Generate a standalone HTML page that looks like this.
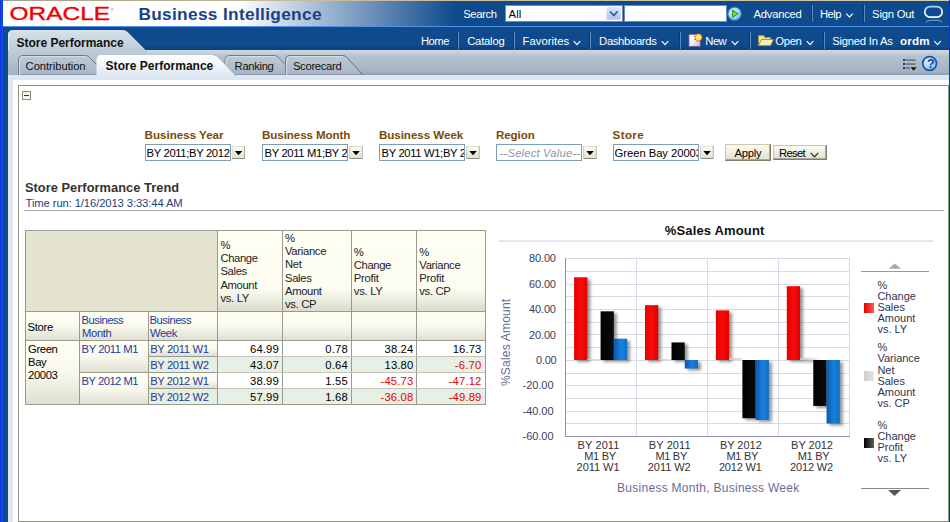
<!DOCTYPE html>
<html lang="en"><head><meta charset="utf-8"><title>Store Performance - Oracle Business Intelligence</title>
<style>
html,body{margin:0;padding:0}
body{width:950px;height:522px;overflow:hidden;background:#fff;position:relative;font-family:"Liberation Sans",sans-serif}
#bg{position:absolute;left:0;top:0}
.t{position:absolute;white-space:pre;line-height:1;font-family:"Liberation Sans",sans-serif}
</style></head><body>
<svg id="bg" width="950" height="522" viewBox="0 0 950 522"><defs>
<linearGradient id="hdr" x1="0" y1="0" x2="950" y2="0" gradientUnits="userSpaceOnUse">
 <stop offset="0" stop-color="#fff"/><stop offset="0.25" stop-color="#fff"/><stop offset="0.48" stop-color="#0e4a8c"/><stop offset="1" stop-color="#0e4a8c"/></linearGradient>
<linearGradient id="ptab" x1="0" y1="30" x2="0" y2="75" gradientUnits="userSpaceOnUse"><stop offset="0" stop-color="#d6e1e8"/><stop offset="0.45" stop-color="#bfccd8"/><stop offset="1" stop-color="#a4b3c5"/></linearGradient>
<linearGradient id="tbar" x1="0" y1="50" x2="0" y2="75" gradientUnits="userSpaceOnUse"><stop offset="0" stop-color="#ced8e0"/><stop offset="0.08" stop-color="#c8d2dc"/><stop offset="0.26" stop-color="#b4c2d0"/><stop offset="0.6" stop-color="#abbaca"/><stop offset="0.9" stop-color="#a2b1c3"/><stop offset="0.94" stop-color="#95a4b7"/><stop offset="1" stop-color="#8e9db0"/></linearGradient>
<linearGradient id="itab" x1="0" y1="55" x2="0" y2="75" gradientUnits="userSpaceOnUse"><stop offset="0" stop-color="#bfcbd6"/><stop offset="1" stop-color="#a6b5c6"/></linearGradient>
<linearGradient id="atab" x1="0" y1="55" x2="0" y2="76" gradientUnits="userSpaceOnUse"><stop offset="0" stop-color="#ffffff"/><stop offset="0.45" stop-color="#f4f7fb"/><stop offset="1" stop-color="#dde7f3"/></linearGradient>
<linearGradient id="hc" x1="0" y1="0" x2="0" y2="1"><stop offset="0" stop-color="#fefef3"/><stop offset="0.72" stop-color="#fcfcf0"/><stop offset="1" stop-color="#dbdbce"/></linearGradient>
<linearGradient id="hc2" x1="0" y1="0" x2="0" y2="1"><stop offset="0" stop-color="#fefef3"/><stop offset="0.5" stop-color="#f9f9ee"/><stop offset="1" stop-color="#dfdfd2"/></linearGradient>
<linearGradient id="gred" x1="0" y1="0" x2="1" y2="0"><stop offset="0" stop-color="#e40000"/><stop offset="0.5" stop-color="#fb0a0a"/><stop offset="1" stop-color="#e00000"/></linearGradient>
<linearGradient id="ggray" x1="0" y1="0" x2="1" y2="0"><stop offset="0" stop-color="#c8c8c8"/><stop offset="1" stop-color="#e4e4e4"/></linearGradient>
<linearGradient id="gblk" x1="0" y1="0" x2="1" y2="0"><stop offset="0" stop-color="#000"/><stop offset="1" stop-color="#0c0c0c"/></linearGradient>
<linearGradient id="gblu" x1="0" y1="0" x2="1" y2="0"><stop offset="0" stop-color="#0a58b0"/><stop offset="0.55" stop-color="#1a80dc"/><stop offset="1" stop-color="#0b6fcc"/></linearGradient>
<linearGradient id="lred" x1="0" y1="0" x2="1" y2="0"><stop offset="0" stop-color="#e60000"/><stop offset="1" stop-color="#ff5a5a"/></linearGradient>
<linearGradient id="lgray" x1="0" y1="0" x2="1" y2="0"><stop offset="0" stop-color="#cccccc"/><stop offset="1" stop-color="#e6e6e6"/></linearGradient>
<linearGradient id="lblk" x1="0" y1="0" x2="1" y2="0"><stop offset="0" stop-color="#000"/><stop offset="1" stop-color="#5c5c5c"/></linearGradient>
<linearGradient id="ddb" x1="0" y1="0" x2="0" y2="1"><stop offset="0" stop-color="#dbe6fb"/><stop offset="1" stop-color="#adc3f2"/></linearGradient>
<linearGradient id="doc" x1="0" y1="0" x2="1" y2="1"><stop offset="0" stop-color="#ffffff"/><stop offset="0.5" stop-color="#f1eefb"/><stop offset="1" stop-color="#b9b0df"/></linearGradient>
<linearGradient id="btn" x1="0" y1="0" x2="0" y2="1"><stop offset="0" stop-color="#fbfbf3"/><stop offset="1" stop-color="#e3e3d0"/></linearGradient>
<linearGradient id="ost" x1="0" y1="6" x2="0" y2="18" gradientUnits="userSpaceOnUse"><stop offset="0" stop-color="#a9c9f2"/><stop offset="0.5" stop-color="#e8f1fd"/><stop offset="1" stop-color="#ffffff"/></linearGradient>
<linearGradient id="orf" x1="0" y1="20" x2="0" y2="23.6" gradientUnits="userSpaceOnUse"><stop offset="0" stop-color="#6f9bd2"/><stop offset="1" stop-color="#1d569a"/></linearGradient>
<linearGradient id="topl" x1="0" y1="0" x2="950" y2="0" gradientUnits="userSpaceOnUse"><stop offset="0" stop-color="#a29e8a"/><stop offset="0.3" stop-color="#c6ba98"/><stop offset="1" stop-color="#d8cca8"/></linearGradient>
<radialGradient id="help" cx="0.35" cy="0.3" r="0.9"><stop offset="0" stop-color="#dcf0ff"/><stop offset="0.6" stop-color="#9dd2fa"/><stop offset="1" stop-color="#62aef0"/></radialGradient>
<radialGradient id="go" cx="0.45" cy="0.4" r="0.7"><stop offset="0" stop-color="#eaf7ff"/><stop offset="0.6" stop-color="#9fd0f0"/><stop offset="1" stop-color="#2a7fcc"/></radialGradient>
<filter id="sh" x="-20%" y="-20%" width="160%" height="160%"><feGaussianBlur stdDeviation="1.7"/></filter>
</defs><rect x="0" y="0" width="950" height="1" fill="url(#topl)" />
<rect x="3" y="1" width="947" height="25" fill="url(#hdr)" />
<rect x="3" y="26" width="947" height="1" fill="#5391ea" />
<rect x="3" y="27" width="947" height="23" fill="#0e4a8c" />
<rect x="143" y="47" width="807" height="3" fill="#0b447c" />
<rect x="8" y="50" width="942" height="25" fill="url(#tbar)" />
<rect x="3" y="50" width="5" height="472" fill="#0e4a8c" />
<path d="M8,76 L8,35 Q8,30.3 12.5,30.3 L123.5,30.3 Q126,30.3 127.6,31.9 L146,50.5 L8,50.5 Z" fill="url(#ptab)" stroke="none" stroke-width="1" />
<rect x="8" y="50" width="138.5" height="25" fill="url(#ptab)" />
<path d="M8.5,50 L8.5,35 Q8.5,30.8 12.5,30.8 L124,30.8" fill="none" stroke="#e4ecf1" stroke-width="1" />
<path d="M8,522 L8,80 Q8,75 13,75 L950,75 L950,522 Z" fill="#dde7f3" stroke="none" stroke-width="1" />
<path d="M13,522 L13,82 Q13,80 15,80 L950,80 L950,522 Z" fill="#ffffff" stroke="none" stroke-width="1" />
<path d="M285.7,75 L285.7,60.0 Q285.7,55.5 290.2,55.5 L342.7,55.5 Q344.7,55.5 346.3,57.1 L363,75 Z" fill="url(#itab)" stroke="#6e7b8c" stroke-width="1" />
<path d="M286.7,75 L286.7,60.0 Q286.7,56.5 290.2,56.5 L342.7,56.5" fill="none" stroke="#d5dde5" stroke-width="1" />
<path d="M225,75 L225,60.0 Q225,55.5 229.5,55.5 L274.5,55.5 Q276.5,55.5 278.1,57.1 L295,75 Z" fill="url(#itab)" stroke="#6e7b8c" stroke-width="1" />
<path d="M226,75 L226,60.0 Q226,56.5 229.5,56.5 L274.5,56.5" fill="none" stroke="#d5dde5" stroke-width="1" />
<rect x="286" y="66" width="12" height="9" fill="url(#itab)" />
<path d="M285.7,75 L285.7,60.0 Q285.7,55.5 290.2,55.5 L342.7,55.5 Q344.7,55.5 346.3,57.1 L363,75 Z" fill="url(#itab)" stroke="#6e7b8c" stroke-width="1" />
<path d="M286.7,75 L286.7,60.0 Q286.7,56.5 290.2,56.5 L342.7,56.5" fill="none" stroke="#d5dde5" stroke-width="1" />
<path d="M18.5,75 L18.5,60.0 Q18.5,55.5 23.0,55.5 L85.6,55.5 Q87.6,55.5 89.19999999999999,57.1 L107,75 Z" fill="url(#itab)" stroke="#6e7b8c" stroke-width="1" />
<path d="M19.5,75 L19.5,60.0 Q19.5,56.5 23.0,56.5 L85.6,56.5" fill="none" stroke="#d5dde5" stroke-width="1" />
<rect x="8" y="75" width="942" height="1" fill="#dde7f3" />
<path d="M96.5,76 L96.5,60 Q96.5,55 101.5,55 L213,55 Q216,55 218,57 L236,76 Z" fill="url(#atab)" stroke="none" stroke-width="1" />
<path d="M236,76 L218,57 Q216,55 213,55" fill="none" stroke="#9aa7b8" stroke-width="0.6" />
<rect x="0" y="0" width="1" height="522" fill="#0d3ce0" />
<rect x="1" y="0" width="2" height="522" fill="#0f48e4" />
<rect x="949" y="0" width="1" height="522" fill="#0831d9" />
<rect x="811" y="5" width="1" height="17" fill="#0a3a70" />
<rect x="812" y="5" width="1" height="17" fill="#5f8abd" />
<rect x="863" y="5" width="1" height="17" fill="#0a3a70" />
<rect x="864" y="5" width="1" height="17" fill="#5f8abd" />
<rect x="457" y="32" width="1" height="17" fill="#0a3a70" />
<rect x="458" y="32" width="1" height="17" fill="#5f8abd" />
<rect x="513" y="32" width="1" height="17" fill="#0a3a70" />
<rect x="514" y="32" width="1" height="17" fill="#5f8abd" />
<rect x="589" y="32" width="1" height="17" fill="#0a3a70" />
<rect x="590" y="32" width="1" height="17" fill="#5f8abd" />
<rect x="679" y="32" width="1" height="17" fill="#0a3a70" />
<rect x="680" y="32" width="1" height="17" fill="#5f8abd" />
<rect x="749" y="32" width="1" height="17" fill="#0a3a70" />
<rect x="750" y="32" width="1" height="17" fill="#5f8abd" />
<rect x="823" y="32" width="1" height="17" fill="#0a3a70" />
<rect x="824" y="32" width="1" height="17" fill="#5f8abd" />
<path d="M846.5,13.82 L849.5,17.18 L852.5,13.82" fill="none" stroke="#ffffff" stroke-width="1.15" stroke-linecap="round" stroke-linejoin="round"/>
<path d="M574,41.32 L577.0,44.68 L580,41.32" fill="none" stroke="#ffffff" stroke-width="1.15" stroke-linecap="round" stroke-linejoin="round"/>
<path d="M662,41.32 L665.0,44.68 L668,41.32" fill="none" stroke="#ffffff" stroke-width="1.15" stroke-linecap="round" stroke-linejoin="round"/>
<path d="M732,41.32 L735.0,44.68 L738,41.32" fill="none" stroke="#ffffff" stroke-width="1.15" stroke-linecap="round" stroke-linejoin="round"/>
<path d="M807,41.32 L810.0,44.68 L813,41.32" fill="none" stroke="#ffffff" stroke-width="1.15" stroke-linecap="round" stroke-linejoin="round"/>
<path d="M934.5,41.32 L937.5,44.68 L940.5,41.32" fill="none" stroke="#ffffff" stroke-width="1.15" stroke-linecap="round" stroke-linejoin="round"/>
<rect x="505" y="5" width="117" height="16" fill="#ffffff" stroke="#6d8db5" stroke-width="1" transform="translate(.5,.5)"/>
<rect x="606.5" y="6.7" width="14.3" height="13" fill="url(#ddb)" rx="1.5"/>
<path d="M610.5,12 L613.8,15.5 L617,12" fill="none" stroke="#3b5a96" stroke-width="1.8" stroke-linecap="round" stroke-linejoin="round"/>
<rect x="624" y="5" width="102" height="16" fill="#ffffff" stroke="#6d8db5" stroke-width="1" transform="translate(.5,.5)"/>
<circle cx="734.6" cy="13.8" r="6.9" fill="url(#go)" stroke="#1e6fc0" stroke-width="1.2"/>
<path d="M732.6,10.3 L737.9,13.7 L732.6,17.1 Z" fill="#86dc4c" stroke="#379a18" stroke-width="1.1" stroke-linejoin="round"/>
<text x="9.6" y="20" font-family="Liberation Sans, sans-serif" font-size="18.2" fill="#f00000" stroke="#f00000" stroke-width="0.35" textLength="100.5" lengthAdjust="spacingAndGlyphs">ORACLE</text>
<text x="111" y="10.5" font-family="Liberation Sans, sans-serif" font-size="3.5" fill="#f00000">®</text>
<rect x="924.8" y="6.7" width="17.4" height="10.5" rx="5.25" fill="none" stroke="url(#ost)" stroke-width="1.75"/>
<path d="M925.6,23.4 Q926.6,20.4 930.3,20.4 L937.7,20.4 Q941.4,20.4 942.4,23.4" fill="none" stroke="url(#orf)" stroke-width="1.4" />
<path d="M688.9,34.3 L700.3,34.3 L700.3,46.6 L688.9,46.6 Z" fill="url(#doc)" stroke="#5a5590" stroke-width="0.9" />
<circle cx="698.4" cy="37.4" r="3.6" fill="#ffe23a" stroke="#d8401a" stroke-width="1.3" stroke-dasharray="1.6 1.2"/>
<path d="M698.4,34.4 V40.4 M695.4,37.4 H701.4" fill="none" stroke="#fff7a8" stroke-width="1" />
<path d="M758.5,45.5 L758.5,35.5 L763.5,35.5 L765,37.5 L770.5,37.5 L770.5,40" fill="#efe09a" stroke="#a8923a" stroke-width="1" />
<path d="M758.5,45.5 L761.5,39.5 L773.5,39.5 L770.5,45.5 Z" fill="#f7eeb4" stroke="#a8923a" stroke-width="1" />
<rect x="903" y="59.0" width="2" height="2" fill="#3b2f8a" />
<rect x="905.5" y="59.5" width="10" height="1.1" fill="#4f4f4f" />
<rect x="903" y="63.0" width="2" height="2" fill="#3b2f8a" />
<rect x="905.5" y="63.5" width="10" height="1.1" fill="#4f4f4f" />
<rect x="903" y="67.0" width="2" height="2" fill="#3b2f8a" />
<rect x="905.5" y="67.5" width="4.5" height="1.1" fill="#4f4f4f" />
<path d="M910.6,67.2 L916.6,67.2 L913.6,70.8 Z" fill="#111" stroke="none" stroke-width="1" />
<circle cx="929.6" cy="63.5" r="6.9" fill="url(#help)" stroke="#1552b2" stroke-width="1.7"/>
<rect x="18.5" y="85.5" width="930" height="436" fill="none" stroke="#8f8f82" stroke-width="1"/>
<rect x="22.5" y="91.5" width="8" height="8" fill="#f5f5ea" stroke="#8b8b80" stroke-width="1"/>
<rect x="24" y="95" width="5" height="1" fill="#333" />
<rect x="24" y="210" width="920" height="1" fill="#a6abb4" />
<rect x="25" y="230" width="461" height="175" fill="#9b9b8d" />
<rect x="26" y="231" width="191" height="80" fill="#e4e4d1" />
<rect x="218" y="231" width="64" height="80" fill="url(#hc)" />
<rect x="283" y="231" width="68" height="80" fill="url(#hc)" />
<rect x="352" y="231" width="64" height="80" fill="url(#hc)" />
<rect x="417" y="231" width="68" height="80" fill="url(#hc)" />
<rect x="26" y="312" width="53" height="28" fill="url(#hc2)" />
<rect x="80" y="312" width="68" height="28" fill="url(#hc2)" />
<rect x="149" y="312" width="68" height="28" fill="url(#hc2)" />
<rect x="218" y="312" width="64" height="28" fill="url(#hc2)" />
<rect x="283" y="312" width="68" height="28" fill="url(#hc2)" />
<rect x="352" y="312" width="64" height="28" fill="url(#hc2)" />
<rect x="417" y="312" width="68" height="28" fill="url(#hc2)" />
<rect x="26" y="341" width="53" height="63" fill="url(#hc2)" />
<rect x="80" y="341" width="68" height="31" fill="url(#hc2)" />
<rect x="80" y="373" width="68" height="31" fill="url(#hc2)" />
<rect x="149" y="341" width="68" height="15" fill="url(#hc2)" />
<rect x="218" y="341" width="64" height="15" fill="#ffffff" />
<rect x="283" y="341" width="68" height="15" fill="#ffffff" />
<rect x="352" y="341" width="64" height="15" fill="#ffffff" />
<rect x="417" y="341" width="68" height="15" fill="#ffffff" />
<rect x="149" y="357" width="68" height="15" fill="#e6efe3" />
<rect x="218" y="357" width="64" height="15" fill="#e7f0e4" />
<rect x="283" y="357" width="68" height="15" fill="#e7f0e4" />
<rect x="352" y="357" width="64" height="15" fill="#e7f0e4" />
<rect x="417" y="357" width="68" height="15" fill="#e7f0e4" />
<rect x="149" y="373" width="68" height="15" fill="url(#hc2)" />
<rect x="218" y="373" width="64" height="15" fill="#ffffff" />
<rect x="283" y="373" width="68" height="15" fill="#ffffff" />
<rect x="352" y="373" width="64" height="15" fill="#ffffff" />
<rect x="417" y="373" width="68" height="15" fill="#ffffff" />
<rect x="149" y="389" width="68" height="15" fill="#e6efe3" />
<rect x="218" y="389" width="64" height="15" fill="#e7f0e4" />
<rect x="283" y="389" width="68" height="15" fill="#e7f0e4" />
<rect x="352" y="389" width="64" height="15" fill="#e7f0e4" />
<rect x="417" y="389" width="68" height="15" fill="#e7f0e4" />
<rect x="218" y="356" width="267" height="1" fill="#c4c4bb" />
<rect x="218" y="372" width="267" height="1" fill="#c4c4bb" />
<rect x="218" y="388" width="267" height="1" fill="#c4c4bb" />
<rect x="499" y="240.5" width="434" height="1.2" fill="#d6d6e6" />
<rect x="566" y="258" width="284" height="1" fill="#dadae7" />
<rect x="566" y="271" width="284" height="1" fill="#dadae7" />
<rect x="566" y="284" width="284" height="1" fill="#dadae7" />
<rect x="566" y="296" width="284" height="1" fill="#dadae7" />
<rect x="566" y="309" width="284" height="1" fill="#dadae7" />
<rect x="566" y="322" width="284" height="1" fill="#dadae7" />
<rect x="566" y="334" width="284" height="1" fill="#dadae7" />
<rect x="566" y="347" width="284" height="1" fill="#dadae7" />
<rect x="566" y="360" width="284" height="1" fill="#dadae7" />
<rect x="566" y="373" width="284" height="1" fill="#dadae7" />
<rect x="566" y="385" width="284" height="1" fill="#dadae7" />
<rect x="566" y="398" width="284" height="1" fill="#dadae7" />
<rect x="566" y="411" width="284" height="1" fill="#dadae7" />
<rect x="566" y="423" width="284" height="1" fill="#dadae7" />
<rect x="636" y="258" width="1" height="179" fill="#d9d9e8" />
<rect x="707" y="258" width="1" height="179" fill="#d9d9e8" />
<rect x="778" y="258" width="1" height="179" fill="#d9d9e8" />
<rect x="849" y="258" width="1" height="179" fill="#d9d9e8" />
<rect x="565" y="258" width="1" height="179" fill="#8e8eb4" />
<rect x="565" y="436" width="285" height="1" fill="#8e8eb4" />
<g filter="url(#sh)" opacity="0.55">
<rect x="577.1" y="279.28" width="13.25" height="82.72" fill="#444" />
<rect x="603.6" y="313.33" width="13.25" height="48.67" fill="#444" />
<rect x="616.85" y="340.71" width="13.25" height="21.29" fill="#444" />
<rect x="648.0" y="307.18" width="13.25" height="54.82" fill="#444" />
<rect x="674.5" y="344.44" width="13.25" height="17.56" fill="#444" />
<rect x="687.75" y="362.0" width="13.25" height="8.53" fill="#444" />
<rect x="718.9" y="312.37" width="13.25" height="49.63" fill="#444" />
<rect x="745.4" y="362.0" width="13.25" height="58.21" fill="#444" />
<rect x="758.65" y="362.0" width="13.25" height="59.97" fill="#444" />
<rect x="789.8" y="288.19" width="13.25" height="73.81" fill="#444" />
<rect x="803.05" y="359.86" width="13.25" height="2.14" fill="#444" />
<rect x="816.3" y="362.0" width="13.25" height="45.92" fill="#444" />
<rect x="829.55" y="362.0" width="13.25" height="63.5" fill="#444" />
</g>
<rect x="574.1" y="277.28" width="13.25" height="82.72" fill="url(#gred)" />
<rect x="587.35" y="359.01" width="13.25" height="0.99" fill="url(#ggray)" />
<rect x="600.6" y="311.33" width="13.25" height="48.67" fill="url(#gblk)" />
<rect x="613.85" y="338.71" width="13.25" height="21.29" fill="url(#gblu)" />
<rect x="645.0" y="305.18" width="13.25" height="54.82" fill="url(#gred)" />
<rect x="658.25" y="359.19" width="13.25" height="0.81" fill="url(#ggray)" />
<rect x="671.5" y="342.44" width="13.25" height="17.56" fill="url(#gblk)" />
<rect x="684.75" y="360.0" width="13.25" height="8.53" fill="url(#gblu)" />
<rect x="715.9" y="310.37" width="13.25" height="49.63" fill="url(#gred)" />
<rect x="729.15" y="358.03" width="13.25" height="1.97" fill="url(#ggray)" />
<rect x="742.4" y="360.0" width="13.25" height="58.21" fill="url(#gblk)" />
<rect x="755.65" y="360.0" width="13.25" height="59.97" fill="url(#gblu)" />
<rect x="786.8" y="286.19" width="13.25" height="73.81" fill="url(#gred)" />
<rect x="800.05" y="357.86" width="13.25" height="2.14" fill="url(#ggray)" />
<rect x="813.3" y="360.0" width="13.25" height="45.92" fill="url(#gblk)" />
<rect x="826.55" y="360.0" width="13.25" height="63.5" fill="url(#gblu)" />
<path d="M888.5,268.8 L894.8,263.6 L901,268.8 Z" fill="#a8a8a8" stroke="none" stroke-width="1" />
<rect x="861" y="271" width="68" height="1" fill="#9a9a9a" />
<rect x="861" y="488" width="68" height="1" fill="#8a8a8a" />
<path d="M888,490 L901,490 L894.5,496 Z" fill="#555" stroke="none" stroke-width="1" />
<rect x="864" y="303" width="10" height="10" fill="url(#lred)" />
<rect x="864" y="371" width="10" height="10" fill="url(#lgray)" />
<rect x="864" y="438" width="10" height="10" fill="url(#lblk)" />
<rect x="232" y="146" width="13" height="13" fill="#8a8a80" />
<rect x="232" y="146" width="12.2" height="12" fill="#dcdcd2" />
<rect x="232.8" y="146.8" width="11.4" height="11.2" fill="url(#btn)" />
<path d="M234.8,151 L242.3,151 L238.55,155.3 Z" fill="#000" stroke="none" stroke-width="1" />
<rect x="349.5" y="146" width="13" height="13" fill="#8a8a80" />
<rect x="349.5" y="146" width="12.2" height="12" fill="#dcdcd2" />
<rect x="350.3" y="146.8" width="11.4" height="11.2" fill="url(#btn)" />
<path d="M352.3,151 L359.8,151 L356.05,155.3 Z" fill="#000" stroke="none" stroke-width="1" />
<rect x="466.5" y="146" width="13" height="13" fill="#8a8a80" />
<rect x="466.5" y="146" width="12.2" height="12" fill="#dcdcd2" />
<rect x="467.3" y="146.8" width="11.4" height="11.2" fill="url(#btn)" />
<path d="M469.3,151 L476.8,151 L473.05,155.3 Z" fill="#000" stroke="none" stroke-width="1" />
<rect x="583.5" y="146" width="13" height="13" fill="#8a8a80" />
<rect x="583.5" y="146" width="12.2" height="12" fill="#dcdcd2" />
<rect x="584.3" y="146.8" width="11.4" height="11.2" fill="url(#btn)" />
<path d="M586.3,151 L593.8,151 L590.05,155.3 Z" fill="#000" stroke="none" stroke-width="1" />
<rect x="700.5" y="146" width="13" height="13" fill="#8a8a80" />
<rect x="700.5" y="146" width="12.2" height="12" fill="#dcdcd2" />
<rect x="701.3" y="146.8" width="11.4" height="11.2" fill="url(#btn)" />
<path d="M703.3,151 L710.8,151 L707.05,155.3 Z" fill="#000" stroke="none" stroke-width="1" />
<rect x="145.5" y="144.5" width="85" height="16" fill="#ffffff" stroke="#7f9db9" stroke-width="1"/>
<rect x="262.5" y="144.5" width="85" height="16" fill="#ffffff" stroke="#7f9db9" stroke-width="1"/>
<rect x="379.5" y="144.5" width="85" height="16" fill="#ffffff" stroke="#7f9db9" stroke-width="1"/>
<rect x="496.5" y="144.5" width="85" height="16" fill="#ffffff" stroke="#7f9db9" stroke-width="1"/>
<rect x="613.5" y="144.5" width="85" height="16" fill="#ffffff" stroke="#7f9db9" stroke-width="1"/>
<rect x="725" y="144" width="46" height="17" fill="#7f7f6c" />
<rect x="725" y="144" width="45" height="16" fill="#cdc9a8" />
<rect x="726" y="145" width="44" height="15" fill="#a9a998" />
<rect x="726" y="145" width="43" height="14" fill="url(#btn)" />
<rect x="773" y="145" width="54" height="15" fill="#7f7f6c" />
<rect x="773" y="145" width="53" height="14" fill="#cdc9a8" />
<rect x="774" y="146" width="52" height="13" fill="#a9a998" />
<rect x="774" y="146" width="51" height="12" fill="url(#btn)" />
<path d="M811,153.04 L814.5,156.96 L818,153.04" fill="none" stroke="#222" stroke-width="1.1" stroke-linecap="round" stroke-linejoin="round"/></svg>

<span class="t" style="left:138.4px;top:6.3px;font-size:17.3px;color:#17428a;letter-spacing:0.32px;font-weight:bold;">Business Intelligence</span>
<span class="t" style="left:463.2px;top:8.8px;font-size:11.25px;color:#ffffff;letter-spacing:-0.39px;">Search</span>
<span class="t" style="left:508.6px;top:8.8px;font-size:11.25px;color:#000;letter-spacing:0.13px;">All</span>
<span class="t" style="left:753.6px;top:8.8px;font-size:11.25px;color:#ffffff;letter-spacing:-0.27px;">Advanced</span>
<span class="t" style="left:819.9px;top:8.8px;font-size:11.25px;color:#ffffff;letter-spacing:-0.51px;">Help</span>
<span class="t" style="left:872.1px;top:8.8px;font-size:11.25px;color:#ffffff;letter-spacing:-0.21px;">Sign Out</span>
<span class="t" style="left:421.0px;top:35.8px;font-size:11.25px;color:#ffffff;letter-spacing:-0.53px;">Home</span>
<span class="t" style="left:467.2px;top:35.8px;font-size:11.25px;color:#ffffff;letter-spacing:-0.21px;">Catalog</span>
<span class="t" style="left:522.6px;top:35.8px;font-size:11.25px;color:#ffffff;letter-spacing:0.04px;">Favorites</span>
<span class="t" style="left:599.1px;top:35.8px;font-size:11.25px;color:#ffffff;letter-spacing:-0.33px;">Dashboards</span>
<span class="t" style="left:705.3px;top:35.8px;font-size:11.25px;color:#ffffff;letter-spacing:-0.54px;">New</span>
<span class="t" style="left:775.3px;top:35.8px;font-size:11.25px;color:#ffffff;letter-spacing:-0.33px;">Open</span>
<span class="t" style="left:832.2px;top:35.8px;font-size:11.25px;color:#ffffff;letter-spacing:-0.22px;">Signed In As</span>
<span class="t" style="left:899.9px;top:34.8px;font-size:11.6px;color:#ffffff;letter-spacing:0.26px;font-weight:bold;">ordm</span>
<span class="t" style="left:16.6px;top:37.1px;font-size:12px;color:#111;letter-spacing:-0.02px;font-weight:bold;">Store Performance</span>
<span class="t" style="left:25.6px;top:60.5px;font-size:11.25px;color:#111;letter-spacing:-0.06px;">Contribution</span>
<span class="t" style="left:105.6px;top:59.5px;font-size:12px;color:#111;letter-spacing:0.02px;font-weight:bold;">Store Performance</span>
<span class="t" style="left:234.6px;top:60.5px;font-size:11.25px;color:#111;letter-spacing:-0.34px;">Ranking</span>
<span class="t" style="left:292.9px;top:60.5px;font-size:11.25px;color:#111;letter-spacing:-0.30px;">Scorecard</span>
<span class="t" style="left:926.9px;top:57.9px;font-size:12.5px;color:#1242a4;font-weight:bold;">?</span>
<span class="t" style="left:144.6px;top:129.0px;font-size:11.6px;color:#7a4a0a;letter-spacing:-0.01px;font-weight:bold;">Business Year</span>
<span class="t" style="left:262.1px;top:129.0px;font-size:11.6px;color:#7a4a0a;letter-spacing:-0.10px;font-weight:bold;">Business Month</span>
<span class="t" style="left:378.9px;top:129.0px;font-size:11.6px;color:#7a4a0a;letter-spacing:-0.04px;font-weight:bold;">Business Week</span>
<span class="t" style="left:495.9px;top:129.0px;font-size:11.6px;color:#7a4a0a;letter-spacing:-0.08px;font-weight:bold;">Region</span>
<span class="t" style="left:612.6px;top:129.0px;font-size:11.6px;color:#7a4a0a;letter-spacing:0.36px;font-weight:bold;">Store</span>
<span class="t" style="left:146.6px;top:147.9px;font-size:11.25px;color:#000;letter-spacing:-0.35px;max-width:83px;overflow:hidden;">BY 2011;BY 2012</span>
<span class="t" style="left:264.5px;top:147.9px;font-size:11.25px;color:#000;letter-spacing:-0.35px;max-width:82px;overflow:hidden;">BY 2011 M1;BY 2012 M1</span>
<span class="t" style="left:381.5px;top:147.9px;font-size:11.25px;color:#000;letter-spacing:-0.35px;max-width:82px;overflow:hidden;">BY 2011 W1;BY 2011 W2</span>
<span class="t" style="left:499.6px;top:147.9px;font-size:11.25px;color:#8b95ad;letter-spacing:0.18px;font-style:italic;">--Select Value--</span>
<span class="t" style="left:614.6px;top:147.9px;font-size:11.25px;color:#000;letter-spacing:-0.05px;max-width:83px;overflow:hidden;">Green Bay 20003</span>
<span class="t" style="left:734.6px;top:147.9px;font-size:11.25px;color:#000;letter-spacing:-0.25px;">Apply</span>
<span class="t" style="left:779.0px;top:147.9px;font-size:11.25px;color:#000;letter-spacing:-0.66px;">Reset</span>
<span class="t" style="left:24.9px;top:181.7px;font-size:12.8px;color:#333;letter-spacing:0.06px;font-weight:bold;">Store Performance Trend</span>
<span class="t" style="left:25.6px;top:197.6px;font-size:11.25px;color:#1d3f78;letter-spacing:-0.11px;">Time run: 1/16/2013 3:33:44 AM</span>
<span class="t" style="left:220.4px;top:240.2px;font-size:11.25px;color:#222;">%</span>
<span class="t" style="left:220.4px;top:253.3px;font-size:11.25px;color:#222;letter-spacing:-0.38px;">Change</span>
<span class="t" style="left:220.4px;top:266.4px;font-size:11.25px;color:#222;letter-spacing:-0.33px;">Sales</span>
<span class="t" style="left:220.4px;top:279.5px;font-size:11.25px;color:#222;letter-spacing:-0.37px;">Amount</span>
<span class="t" style="left:220.4px;top:292.6px;font-size:11.25px;color:#222;letter-spacing:-0.29px;">vs. LY</span>
<span class="t" style="left:285.0px;top:233.2px;font-size:11.25px;color:#222;">%</span>
<span class="t" style="left:285.0px;top:246.3px;font-size:11.25px;color:#222;letter-spacing:-0.31px;">Variance</span>
<span class="t" style="left:285.0px;top:259.4px;font-size:11.25px;color:#222;letter-spacing:-0.34px;">Net</span>
<span class="t" style="left:285.0px;top:272.5px;font-size:11.25px;color:#222;letter-spacing:-0.33px;">Sales</span>
<span class="t" style="left:285.0px;top:285.6px;font-size:11.25px;color:#222;letter-spacing:-0.37px;">Amount</span>
<span class="t" style="left:285.0px;top:298.7px;font-size:11.25px;color:#222;letter-spacing:-0.32px;">vs. CP</span>
<span class="t" style="left:353.8px;top:246.5px;font-size:11.25px;color:#222;">%</span>
<span class="t" style="left:353.8px;top:259.6px;font-size:11.25px;color:#222;letter-spacing:-0.38px;">Change</span>
<span class="t" style="left:353.8px;top:272.7px;font-size:11.25px;color:#222;letter-spacing:-0.25px;">Profit</span>
<span class="t" style="left:353.8px;top:285.8px;font-size:11.25px;color:#222;letter-spacing:-0.29px;">vs. LY</span>
<span class="t" style="left:419.3px;top:246.5px;font-size:11.25px;color:#222;">%</span>
<span class="t" style="left:419.3px;top:259.6px;font-size:11.25px;color:#222;letter-spacing:-0.31px;">Variance</span>
<span class="t" style="left:419.3px;top:272.7px;font-size:11.25px;color:#222;letter-spacing:-0.25px;">Profit</span>
<span class="t" style="left:419.3px;top:285.8px;font-size:11.25px;color:#222;letter-spacing:-0.32px;">vs. CP</span>
<span class="t" style="left:27.6px;top:321.8px;font-size:11.25px;color:#000;letter-spacing:-0.31px;">Store</span>
<span class="t" style="left:81.6px;top:315.0px;font-size:11.25px;color:#223c9c;letter-spacing:-0.52px;">Business</span>
<span class="t" style="left:82.0px;top:327.6px;font-size:11.25px;color:#223c9c;letter-spacing:-0.36px;">Month</span>
<span class="t" style="left:149.6px;top:315.0px;font-size:11.25px;color:#223c9c;letter-spacing:-0.52px;">Business</span>
<span class="t" style="left:150.0px;top:327.6px;font-size:11.25px;color:#223c9c;letter-spacing:-0.41px;">Week</span>
<span class="t" style="left:28.0px;top:343.7px;font-size:11.25px;color:#000;letter-spacing:-0.36px;">Green</span>
<span class="t" style="left:28.0px;top:356.8px;font-size:11.25px;color:#000;letter-spacing:-0.37px;">Bay</span>
<span class="t" style="left:28.0px;top:369.9px;font-size:11.25px;color:#000;letter-spacing:-0.36px;">20003</span>
<span class="t" style="left:81.6px;top:343.7px;font-size:11.25px;color:#223c9c;letter-spacing:-0.45px;">BY 2011 M1</span>
<span class="t" style="left:81.6px;top:375.7px;font-size:11.25px;color:#223c9c;letter-spacing:-0.53px;">BY 2012 M1</span>
<span class="t" style="left:150.2px;top:343.7px;font-size:11.25px;color:#223c9c;letter-spacing:-0.38px;">BY 2011 W1</span>
<span class="t" style="left:150.2px;top:359.7px;font-size:11.25px;color:#223c9c;letter-spacing:-0.38px;">BY 2011 W2</span>
<span class="t" style="left:150.2px;top:375.7px;font-size:11.25px;color:#223c9c;letter-spacing:-0.47px;">BY 2012 W1</span>
<span class="t" style="left:150.2px;top:391.7px;font-size:11.25px;color:#223c9c;letter-spacing:-0.47px;">BY 2012 W2</span>
<span class="t" style="left:250.1px;top:344.0px;font-size:11.25px;color:#000;letter-spacing:0.13px;">64.99</span>
<span class="t" style="left:325.3px;top:344.0px;font-size:11.25px;color:#000;letter-spacing:0.21px;">0.78</span>
<span class="t" style="left:384.5px;top:344.0px;font-size:11.25px;color:#000;letter-spacing:0.13px;">38.24</span>
<span class="t" style="left:452.7px;top:344.0px;font-size:11.25px;color:#000;letter-spacing:0.13px;">16.73</span>
<span class="t" style="left:250.1px;top:360.0px;font-size:11.25px;color:#000;letter-spacing:0.13px;">43.07</span>
<span class="t" style="left:325.3px;top:360.0px;font-size:11.25px;color:#000;letter-spacing:0.21px;">0.64</span>
<span class="t" style="left:384.5px;top:360.0px;font-size:11.25px;color:#000;letter-spacing:0.13px;">13.80</span>
<span class="t" style="left:454.7px;top:360.0px;font-size:11.25px;color:#e60000;letter-spacing:0.22px;">-6.70</span>
<span class="t" style="left:250.1px;top:376.0px;font-size:11.25px;color:#000;letter-spacing:0.13px;">38.99</span>
<span class="t" style="left:325.3px;top:376.0px;font-size:11.25px;color:#000;letter-spacing:0.21px;">1.55</span>
<span class="t" style="left:380.5px;top:376.0px;font-size:11.25px;color:#e60000;letter-spacing:0.15px;">-45.73</span>
<span class="t" style="left:448.7px;top:376.0px;font-size:11.25px;color:#e60000;letter-spacing:0.15px;">-47.12</span>
<span class="t" style="left:250.1px;top:392.0px;font-size:11.25px;color:#000;letter-spacing:0.13px;">57.99</span>
<span class="t" style="left:325.3px;top:392.0px;font-size:11.25px;color:#000;letter-spacing:0.21px;">1.68</span>
<span class="t" style="left:380.5px;top:392.0px;font-size:11.25px;color:#e60000;letter-spacing:0.15px;">-36.08</span>
<span class="t" style="left:448.7px;top:392.0px;font-size:11.25px;color:#e60000;letter-spacing:0.15px;">-49.89</span>
<span class="t" style="left:664.7px;top:223.8px;font-size:13px;color:#111;letter-spacing:0.16px;font-weight:bold;">%Sales Amount</span>
<span class="t" style="left:529.1px;top:253.1px;font-size:11px;color:#3d3d5c;letter-spacing:-0.17px;">80.00</span>
<span class="t" style="left:529.1px;top:278.6px;font-size:11px;color:#3d3d5c;letter-spacing:-0.17px;">60.00</span>
<span class="t" style="left:529.1px;top:304.0px;font-size:11px;color:#3d3d5c;letter-spacing:-0.17px;">40.00</span>
<span class="t" style="left:529.1px;top:329.5px;font-size:11px;color:#3d3d5c;letter-spacing:-0.17px;">20.00</span>
<span class="t" style="left:536.0px;top:354.9px;font-size:11px;color:#3d3d5c;letter-spacing:-0.24px;">0.00</span>
<span class="t" style="left:522.6px;top:380.4px;font-size:11px;color:#3d3d5c;letter-spacing:-0.05px;">-20.00</span>
<span class="t" style="left:522.6px;top:405.8px;font-size:11px;color:#3d3d5c;letter-spacing:-0.05px;">-40.00</span>
<span class="t" style="left:522.6px;top:431.3px;font-size:11px;color:#3d3d5c;letter-spacing:-0.05px;">-60.00</span>
<span class="t" style="left:577.6px;top:440.3px;font-size:11px;color:#333;letter-spacing:0.10px;">BY 2011</span>
<span class="t" style="left:584.2px;top:451.0px;font-size:11px;color:#333;letter-spacing:-0.29px;">M1 BY</span>
<span class="t" style="left:576.6px;top:461.8px;font-size:11px;color:#333;letter-spacing:-0.05px;">2011 W1</span>
<span class="t" style="left:648.8px;top:440.3px;font-size:11px;color:#333;letter-spacing:0.10px;">BY 2011</span>
<span class="t" style="left:655.4px;top:451.0px;font-size:11px;color:#333;letter-spacing:-0.29px;">M1 BY</span>
<span class="t" style="left:647.8px;top:461.8px;font-size:11px;color:#333;letter-spacing:-0.05px;">2011 W2</span>
<span class="t" style="left:719.9px;top:440.3px;font-size:11px;color:#333;letter-spacing:-0.02px;">BY 2012</span>
<span class="t" style="left:726.5px;top:451.0px;font-size:11px;color:#333;letter-spacing:-0.29px;">M1 BY</span>
<span class="t" style="left:718.9px;top:461.8px;font-size:11px;color:#333;letter-spacing:-0.16px;">2012 W1</span>
<span class="t" style="left:791.1px;top:440.3px;font-size:11px;color:#333;letter-spacing:-0.02px;">BY 2012</span>
<span class="t" style="left:797.7px;top:451.0px;font-size:11px;color:#333;letter-spacing:-0.29px;">M1 BY</span>
<span class="t" style="left:790.1px;top:461.8px;font-size:11px;color:#333;letter-spacing:-0.16px;">2012 W2</span>
<span class="t" style="left:617.1px;top:482.1px;font-size:12px;color:#6a6a99;letter-spacing:0.27px;">Business Month, Business Week</span>
<span class="t" style="left:500.2px;top:386.1px;font-size:12px;color:#6a6a99;letter-spacing:0.20px;transform:rotate(-90deg);transform-origin:0 0;">%Sales Amount</span>
<span class="t" style="left:877.4px;top:279.6px;font-size:11px;color:#33334d;">%</span>
<span class="t" style="left:877.4px;top:290.7px;font-size:11px;color:#33334d;">Change</span>
<span class="t" style="left:877.4px;top:301.7px;font-size:11px;color:#33334d;">Sales</span>
<span class="t" style="left:877.4px;top:312.8px;font-size:11px;color:#33334d;">Amount</span>
<span class="t" style="left:877.4px;top:323.8px;font-size:11px;color:#33334d;">vs. LY</span>
<span class="t" style="left:877.4px;top:342.4px;font-size:11px;color:#33334d;">%</span>
<span class="t" style="left:877.4px;top:353.4px;font-size:11px;color:#33334d;">Variance</span>
<span class="t" style="left:877.4px;top:364.5px;font-size:11px;color:#33334d;">Net</span>
<span class="t" style="left:877.4px;top:375.5px;font-size:11px;color:#33334d;">Sales</span>
<span class="t" style="left:877.4px;top:386.6px;font-size:11px;color:#33334d;">Amount</span>
<span class="t" style="left:877.4px;top:397.6px;font-size:11px;color:#33334d;">vs. CP</span>
<span class="t" style="left:877.4px;top:420.2px;font-size:11px;color:#33334d;">%</span>
<span class="t" style="left:877.4px;top:431.2px;font-size:11px;color:#33334d;">Change</span>
<span class="t" style="left:877.4px;top:442.3px;font-size:11px;color:#33334d;">Profit</span>
<span class="t" style="left:877.4px;top:453.4px;font-size:11px;color:#33334d;">vs. LY</span>
</body></html>
